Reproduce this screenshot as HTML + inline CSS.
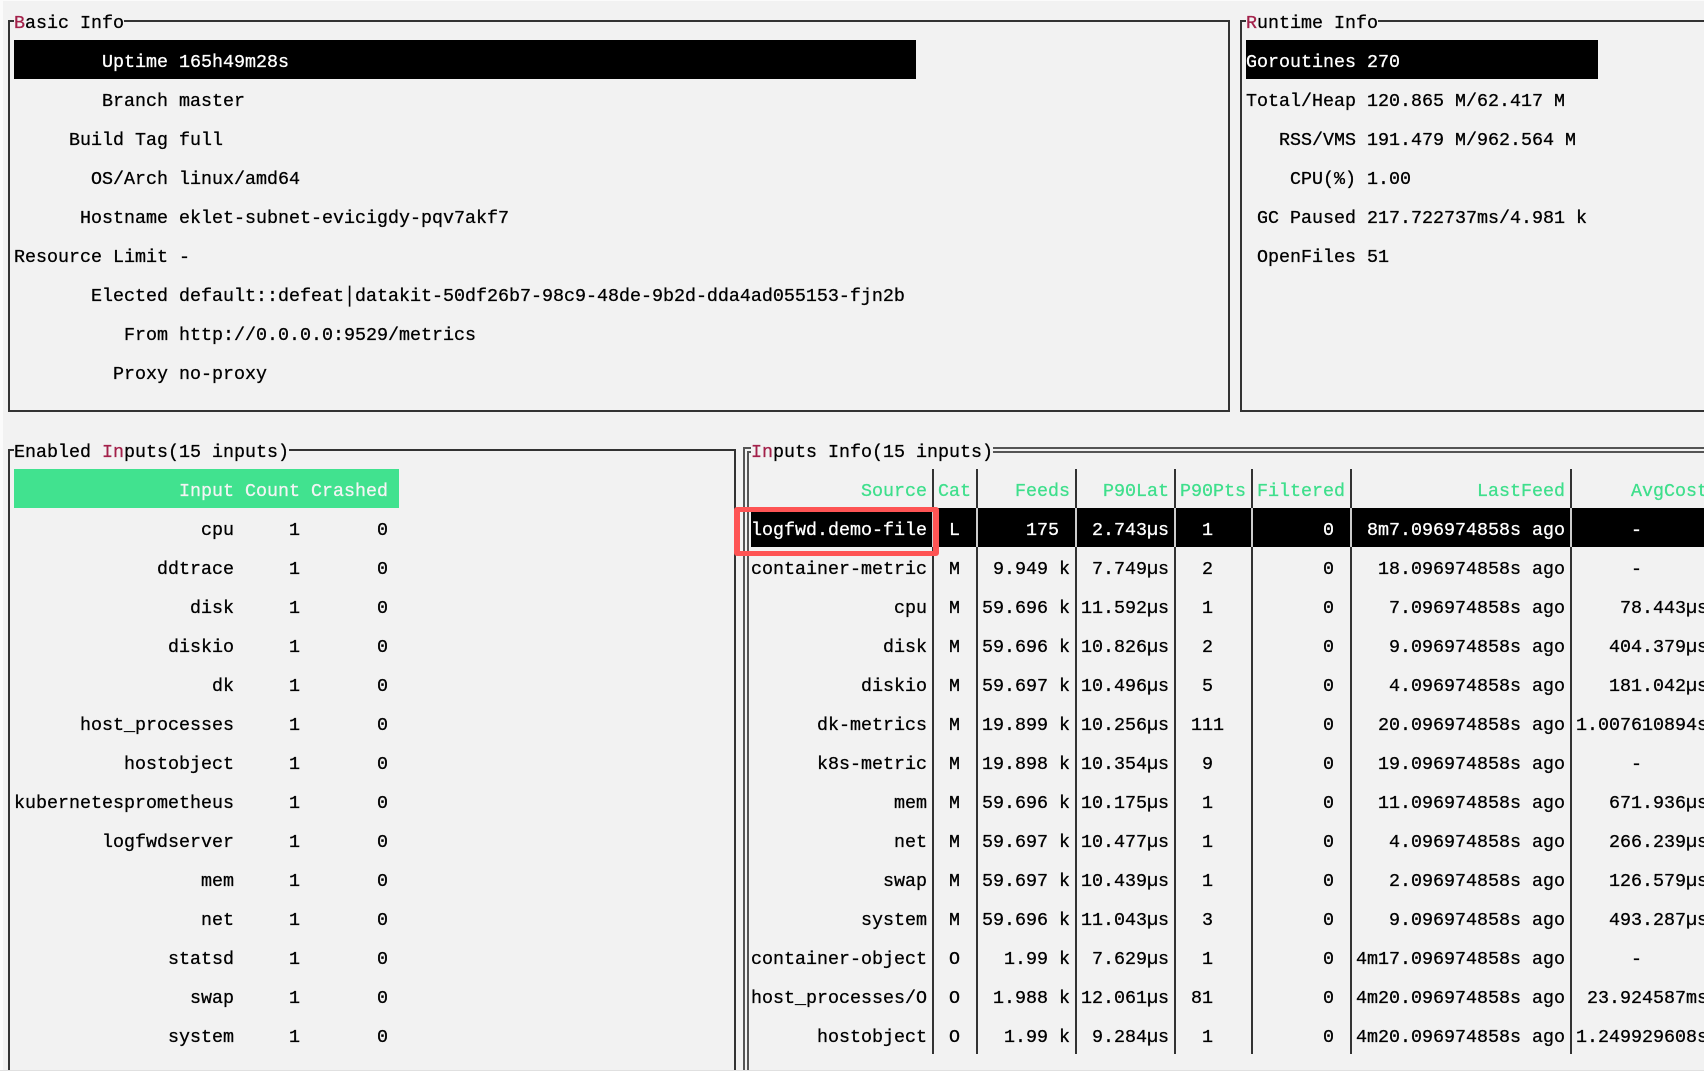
<!DOCTYPE html>
<html><head><meta charset="utf-8"><title>Monitor</title>
<style>
html,body{margin:0;padding:0;width:1704px;height:1071px;overflow:hidden;background:#f2f2f2}
body{position:relative;font-family:"Liberation Mono",monospace;font-size:18.33px;color:#000;-webkit-text-stroke:0.3px currentColor}
pre{position:absolute;margin:0;font:inherit;line-height:39px;white-space:pre}
.r{text-align:right}.ce{text-align:center}
i{font-style:normal;color:#a3214a}
.w{color:#fff}.g{color:#3fdf8c}.wh{color:#f4f4f4}
.v{position:absolute;width:2px;background:#333}
.h{position:absolute;height:2px;background:#333}
.d{position:absolute;background:#555}
.b{position:absolute;background:#000}
</style></head><body>
<div class="b" style="left:0;top:0;width:3px;height:1071px;background:#fbfbfb"></div>
<div class="b" style="left:0;top:0;width:1704px;height:1px;background:#fbfbfb"></div>
<div class="b" style="left:0;top:1070px;width:1704px;height:1px;background:#e0e0e0"></div>

<div class="b" style="left:14px;top:40px;width:902px;height:39px"></div>
<div class="b" style="left:1246px;top:40px;width:352px;height:39px"></div>
<div class="b" style="left:14px;top:469px;width:385px;height:39px;background:#41e28f"></div>
<div class="b" style="left:751px;top:508px;width:953px;height:39px"></div>

<div class="v" style="left:8px;top:20px;height:391px"></div>
<div class="h" style="left:8px;top:20px;width:6px"></div>
<div class="h" style="left:124px;top:20px;width:1106px"></div>
<div class="h" style="left:8px;top:410px;width:1222px"></div>
<div class="v" style="left:1228px;top:20px;height:391px"></div>

<div class="v" style="left:1240px;top:20px;height:391px"></div>
<div class="h" style="left:1240px;top:20px;width:6px"></div>
<div class="h" style="left:1378px;top:20px;width:326px"></div>
<div class="h" style="left:1240px;top:410px;width:464px"></div>

<div class="v" style="left:8px;top:449px;height:621px"></div>
<div class="h" style="left:8px;top:449px;width:6px"></div>
<div class="h" style="left:289px;top:449px;width:446px"></div>
<div class="v" style="left:734px;top:449px;height:621px"></div>

<div class="d" style="left:743px;top:447px;width:2px;height:623px"></div>
<div class="d" style="left:747px;top:451px;width:2px;height:619px"></div>
<div class="d" style="left:743px;top:447px;width:8px;height:2px"></div>
<div class="d" style="left:747px;top:451px;width:4px;height:2px"></div>
<div class="d" style="left:993px;top:447px;width:711px;height:2px"></div>
<div class="d" style="left:993px;top:451px;width:711px;height:2px"></div>

<div class="v" style="left:932px;top:469px;height:585px"></div>
<div class="v" style="left:976px;top:469px;height:585px"></div>
<div class="v" style="left:1075px;top:469px;height:585px"></div>
<div class="v" style="left:1174px;top:469px;height:585px"></div>
<div class="v" style="left:1251px;top:469px;height:585px"></div>
<div class="v" style="left:1350px;top:469px;height:585px"></div>
<div class="v" style="left:1570px;top:469px;height:585px"></div>
<div class="v" style="left:932px;top:508px;height:39px;background:#ccc"></div>
<div class="v" style="left:976px;top:508px;height:39px;background:#ccc"></div>
<div class="v" style="left:1075px;top:508px;height:39px;background:#ccc"></div>
<div class="v" style="left:1174px;top:508px;height:39px;background:#ccc"></div>
<div class="v" style="left:1251px;top:508px;height:39px;background:#ccc"></div>
<div class="v" style="left:1350px;top:508px;height:39px;background:#ccc"></div>
<div class="v" style="left:1570px;top:508px;height:39px;background:#ccc"></div>

<pre style="left:14px;top:4px"><i>B</i>asic Info</pre>
<pre style="left:1246px;top:4px"><i>R</i>untime Info</pre>
<pre style="left:14px;top:433px">Enabled <i>In</i>puts(15 inputs)</pre>
<pre style="left:751px;top:433px"><i>In</i>puts Info(15 inputs)</pre>

<pre class="r" style="left:14px;top:43px;width:154px"><span class="w">Uptime</span>
Branch
Build Tag
OS/Arch
Hostname
Resource Limit
Elected
From
Proxy</pre>
<pre style="left:179px;top:43px"><span class="w">165h49m28s</span>
master
full
linux/amd64
eklet-subnet-evicigdy-pqv7akf7
-
default::defeat│datakit-50df26b7-98c9-48de-9b2d-dda4ad055153-fjn2b
http://0.0.0.0:9529/metrics
no-proxy</pre>

<pre class="r" style="left:1246px;top:43px;width:110px"><span class="w">Goroutines</span>
Total/Heap
RSS/VMS
CPU(%)
GC Paused
OpenFiles</pre>
<pre style="left:1367px;top:43px"><span class="w">270</span>
120.865 M/62.417 M
191.479 M/962.564 M
1.00
217.722737ms/4.981 k
51</pre>

<pre class="r" style="left:14px;top:472px;width:220px"><span class="wh">Input</span>
cpu
ddtrace
disk
diskio
dk
host_processes
hostobject
kubernetesprometheus
logfwdserver
mem
net
statsd
swap
system</pre>
<pre class="r" style="left:245px;top:472px;width:55px"><span class="wh">Count</span>
1
1
1
1
1
1
1
1
1
1
1
1
1
1</pre>
<pre class="r" style="left:311px;top:472px;width:77px"><span class="wh">Crashed</span>
0
0
0
0
0
0
0
0
0
0
0
0
0
0</pre>

<pre class="r" style="left:751px;top:472px;width:176px"><span class="g">Source</span>
<span class="w">logfwd.demo-file</span>
container-metric
cpu
disk
diskio
dk-metrics
k8s-metric
mem
net
swap
system
container-object
host_processes/O
hostobject</pre>
<pre class="ce" style="left:938px;top:472px;width:33px"><span class="g">Cat</span>
<span class="w">L</span>
M
M
M
M
M
M
M
M
M
M
O
O
O</pre>
<pre class="r" style="left:982px;top:472px;width:88px"><span class="g">Feeds</span>
<span class="w">175 </span>
9.949 k
59.696 k
59.696 k
59.697 k
19.899 k
19.898 k
59.696 k
59.697 k
59.697 k
59.696 k
1.99 k
1.988 k
1.99 k</pre>
<pre class="r" style="left:1081px;top:472px;width:88px"><span class="g">P90Lat</span>
<span class="w">2.743µs</span>
7.749µs
11.592µs
10.826µs
10.496µs
10.256µs
10.354µs
10.175µs
10.477µs
10.439µs
11.043µs
7.629µs
12.061µs
9.284µs</pre>
<pre style="left:1180px;top:472px"><span class="g">P90Pts</span>
<span class="w">  1</span>
  2
  1
  2
  5
 111
  9
  1
  1
  1
  3
  1
 81
  1</pre>
<pre style="left:1257px;top:472px"><span class="g">Filtered</span>
<span class="w">      0</span>
      0
      0
      0
      0
      0
      0
      0
      0
      0
      0
      0
      0
      0</pre>
<pre class="r" style="left:1356px;top:472px;width:209px"><span class="g">LastFeed</span>
<span class="w">8m7.096974858s ago</span>
18.096974858s ago
7.096974858s ago
9.096974858s ago
4.096974858s ago
20.096974858s ago
19.096974858s ago
11.096974858s ago
4.096974858s ago
2.096974858s ago
9.096974858s ago
4m17.096974858s ago
4m20.096974858s ago
4m20.096974858s ago</pre>
<pre class="r" style="left:1576px;top:472px;width:132px"><span class="g">AvgCost</span>
<span class="w">-      </span>
-      
78.443µs
404.379µs
181.042µs
1.007610894s
-      
671.936µs
266.239µs
126.579µs
493.287µs
-      
23.924587ms
1.249929608s</pre>

<div style="position:absolute;left:734px;top:507px;width:193px;height:39px;border:6px solid #fe5454;border-radius:3px;border-top-width:5px;border-bottom-width:5px"></div>
</body></html>
